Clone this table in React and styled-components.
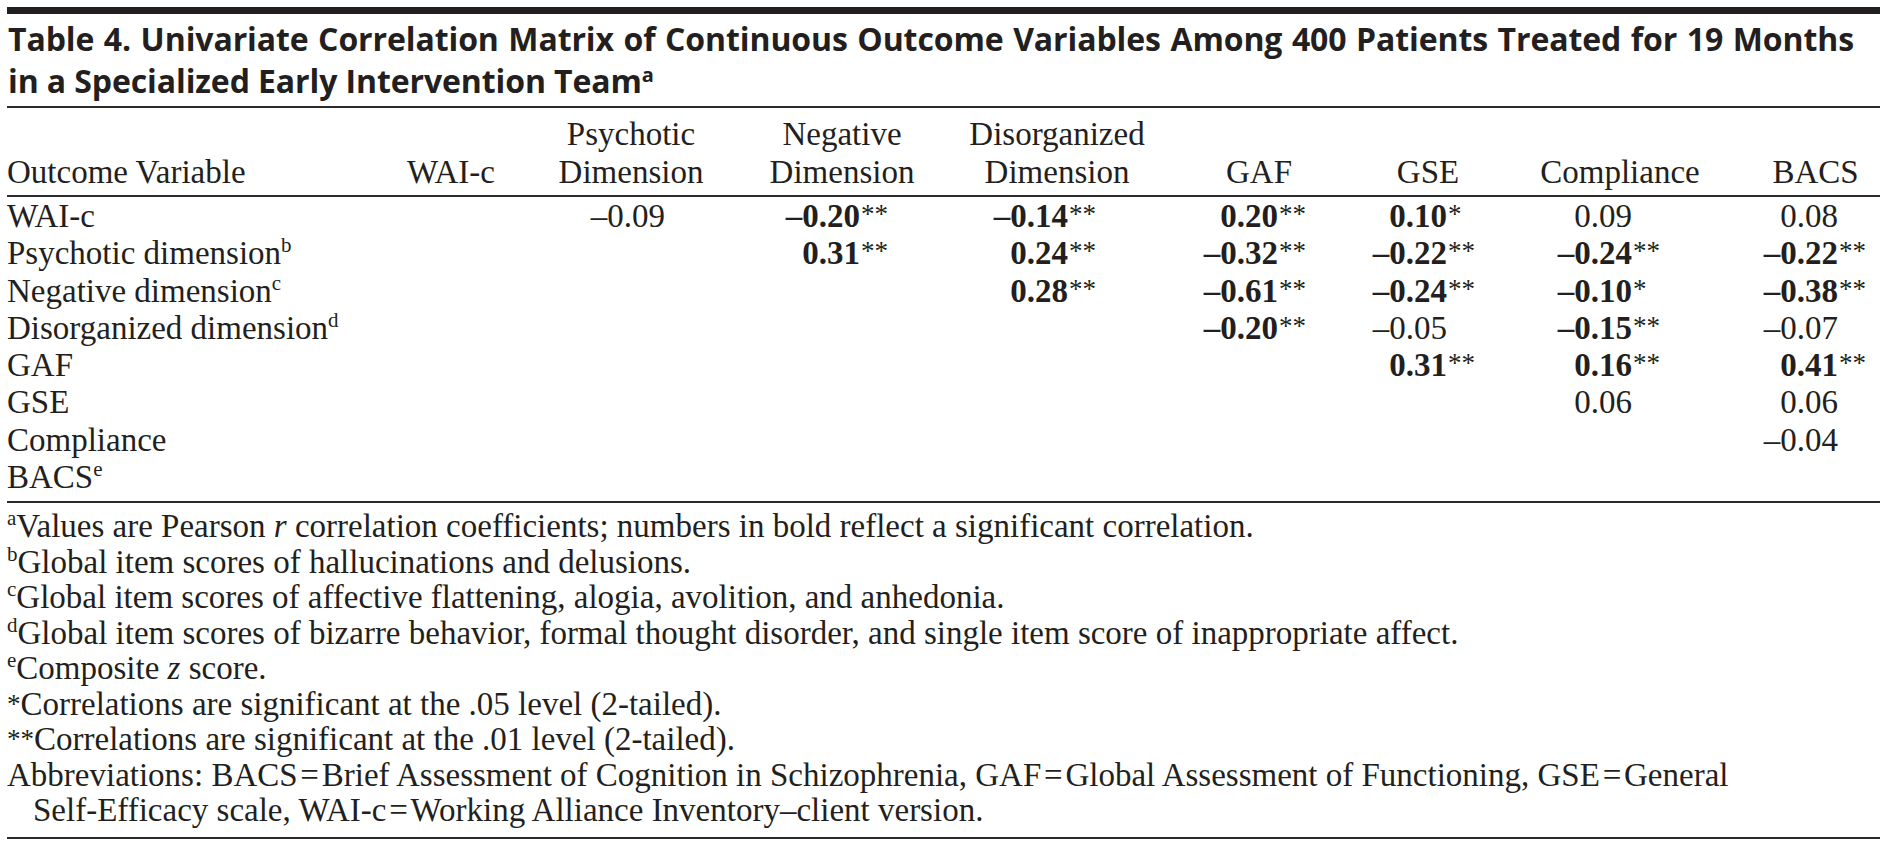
import React from "react";
import styled, { createGlobalStyle } from "styled-components";

const GlobalStyle = createGlobalStyle`
  html, body {
    margin: 0;
    padding: 0;
    background: #ffffff;
  }
`;

const COLS = [354, 180, 180, 242, 188, 216, 122, 262, 129];
// distance from a column's left edge to the right edge of its numbers
const EDGES = [110, 124, 139, 105, 127, 80, 143, 87];

const HEADERS = [
  ["", "WAI-c"],
  ["Psychotic", "Dimension"],
  ["Negative", "Dimension"],
  ["Disorganized", "Dimension"],
  ["", "GAF"],
  ["", "GSE"],
  ["", "Compliance"],
  ["", "BACS"],
];

const D = "\u2013";

const ROWS = [
  {
    label: "WAI-c",
    cells: [null, [`${D}0.09`], [`${D}0.20`, "**", 1], [`${D}0.14`, "**", 1], ["0.20", "**", 1], ["0.10", "*", 1], ["0.09"], ["0.08"]],
  },
  {
    label: "Psychotic dimension",
    sup: "b",
    cells: [null, null, ["0.31", "**", 1], ["0.24", "**", 1], [`${D}0.32`, "**", 1], [`${D}0.22`, "**", 1], [`${D}0.24`, "**", 1], [`${D}0.22`, "**", 1]],
  },
  {
    label: "Negative dimension",
    sup: "c",
    cells: [null, null, null, ["0.28", "**", 1], [`${D}0.61`, "**", 1], [`${D}0.24`, "**", 1], [`${D}0.10`, "*", 1], [`${D}0.38`, "**", 1]],
  },
  {
    label: "Disorganized dimension",
    sup: "d",
    cells: [null, null, null, null, [`${D}0.20`, "**", 1], [`${D}0.05`], [`${D}0.15`, "**", 1], [`${D}0.07`]],
  },
  {
    label: "GAF",
    cells: [null, null, null, null, null, ["0.31", "**", 1], ["0.16", "**", 1], ["0.41", "**", 1]],
  },
  {
    label: "GSE",
    cells: [null, null, null, null, null, null, ["0.06"], ["0.06"]],
  },
  {
    label: "Compliance",
    cells: [null, null, null, null, null, null, null, [`${D}0.04`]],
  },
  {
    label: "BACS",
    sup: "e",
    cells: [null, null, null, null, null, null, null, null],
  },
];

const H = "\u200A";

export default function App() {
  return (
    <Page>
      <GlobalStyle />
      <TopBar />
      <Title>
        <TitleLine $justify>
          Table 4. Univariate Correlation Matrix of Continuous Outcome Variables Among 400 Patients Treated for 19 Months
        </TitleLine>
        <TitleLine>
          in a Specialized Early Intervention Team<TitleSup>a</TitleSup>
        </TitleLine>
      </Title>
      <Rule />
      <HeadRow>
        <HeadLabel>Outcome Variable</HeadLabel>
        {HEADERS.map(([a, b], i) => (
          <HeadCell key={i}>
            {a && <div>{a}</div>}
            <div>{b}</div>
          </HeadCell>
        ))}
      </HeadRow>
      <Rule />
      <Body>
        {ROWS.map((row) => (
          <Row key={row.label}>
            <Label>
              {row.label}
              {row.sup && <Sup>{row.sup}</Sup>}
            </Label>
            {row.cells.map((c, i) => (
              <Cell key={i} $edge={EDGES[i]}>
                {c && (
                  <>
                    <Num $bold={!!c[2]}>{c[0]}</Num>
                    <Stars>{c[1] || ""}</Stars>
                  </>
                )}
              </Cell>
            ))}
          </Row>
        ))}
      </Body>
      <Rule />
      <Notes>
        <Note>
          <Sup>a</Sup>Values are Pearson <i>r</i> correlation coefficients; numbers in bold reflect a significant correlation.
        </Note>
        <Note>
          <Sup>b</Sup>Global item scores of hallucinations and delusions.
        </Note>
        <Note>
          <Sup>c</Sup>Global item scores of affective flattening, alogia, avolition, and anhedonia.
        </Note>
        <Note>
          <Sup>d</Sup>Global item scores of bizarre behavior, formal thought disorder, and single item score of inappropriate affect.
        </Note>
        <Note>
          <Sup>e</Sup>Composite <i>z</i> score.
        </Note>
        <Note>
          <NoteStars>*</NoteStars>Correlations are significant at the .05 level (2-tailed).
        </Note>
        <Note>
          <NoteStars>**</NoteStars>Correlations are significant at the .01 level (2-tailed).
        </Note>
        <Note>
          Abbreviations: BACS{H}={H}Brief Assessment of Cognition in Schizophrenia, GAF{H}={H}Global Assessment of Functioning, GSE{H}={H}General
        </Note>
        <Note $indent>
          Self-Efficacy scale, WAI-c{H}={H}Working Alliance Inventory{D}client version.
        </Note>
      </Notes>
      <Rule />
    </Page>
  );
}

const Page = styled.div`
  width: 1873px;
  padding: 7px 8px 0 7px;
  color: #231f20;
  font-family: "Liberation Serif", "Times New Roman", serif;
  font-size: 33px;
`;

const TopBar = styled.div`
  height: 7px;
  background: #231f20;
`;

const Title = styled.div`
  padding: 4px 0 4px 1px;
  font-family: "Open Sans", "Noto Sans", sans-serif;
  font-weight: 700;
  font-size: 32px;
  line-height: 42px;
  letter-spacing: -0.1px;
`;

const TitleLine = styled.div`
  width: ${(p) => (p.$justify ? "1846px" : "auto")};
  text-align: ${(p) => (p.$justify ? "justify" : "left")};
  text-align-last: ${(p) => (p.$justify ? "justify" : "auto")};
  white-space: ${(p) => (p.$justify ? "normal" : "nowrap")};
`;

const TitleSup = styled.sup`
  font-size: 20px;
  line-height: 0;
  vertical-align: 11px;
`;

const Rule = styled.div`
  height: 2px;
  background: #2b2b2b;
`;

const HeadRow = styled.div`
  display: grid;
  grid-template-columns: ${COLS.map((c) => `${c}px`).join(" ")};
  align-items: end;
  padding: 7px 0 4px;
  line-height: 38px;
`;

const HeadLabel = styled.div`
  white-space: nowrap;
`;

const HeadCell = styled.div`
  text-align: center;
  white-space: nowrap;
`;

const Body = styled.div`
  padding: 1px 0 5px;
`;

const Row = styled.div`
  display: grid;
  grid-template-columns: ${COLS.map((c) => `${c}px`).join(" ")};
  line-height: 37.3px;
  height: 37.3px;
`;

const Label = styled.div`
  white-space: nowrap;
`;

const Sup = styled.sup`
  font-size: 21px;
  line-height: 0;
  vertical-align: 12px;
`;

const Cell = styled.div`
  display: grid;
  grid-template-columns: ${(p) => p.$edge}px auto;
  align-items: start;
  white-space: nowrap;
`;

const Num = styled.span`
  text-align: right;
  font-weight: ${(p) => (p.$bold ? 700 : 400)};
`;

const Stars = styled.span`
  font-weight: 400;
  font-size: 27px;
  line-height: 33px;
  padding-left: 1px;
`;

const NoteStars = styled.span`
  font-size: 27px;
  vertical-align: 2px;
`;

const Notes = styled.div`
  padding: 6px 0 8px;
`;

const Note = styled.div`
  line-height: 35.5px;
  height: 35.5px;
  white-space: nowrap;
  padding-left: ${(p) => (p.$indent ? "26px" : "0")};
`;
